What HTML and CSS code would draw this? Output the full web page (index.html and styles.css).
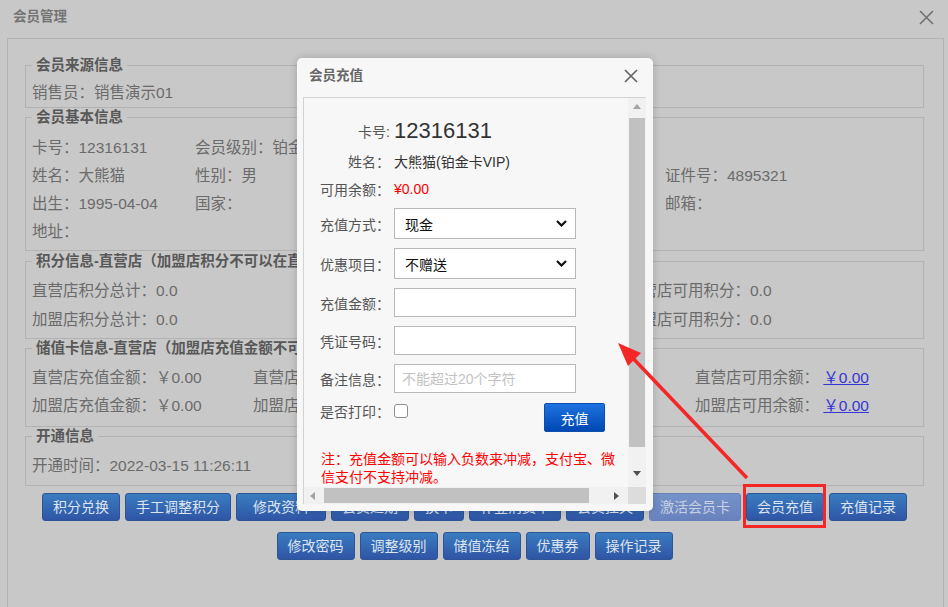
FILE: index.html
```html
<!DOCTYPE html>
<html lang="zh-CN">
<head>
<meta charset="utf-8">
<title>会员管理</title>
<link rel="stylesheet" href="styles.css">
</head>
<body>
<div class="window">
  <header class="win-head">
    <span class="win-title">会员管理</span>
    <svg class="win-close" width="15" height="15" viewBox="0 0 15 15"><path d="M1 1L14 14M14 1L1 14"/></svg>
  </header>
  <div class="panel">
    <fieldset class="box box-source">
      <legend>会员来源信息</legend>
      <div class="row">销售员：销售演示01</div>
    </fieldset>
    <fieldset class="box box-basic">
      <legend>会员基本信息</legend>
      <div class="grid grid-basic">
        <span>卡号：12316131</span><span>会员级别：铂金卡VIP</span><span>手机：13800000000</span><span></span>
        <span>姓名：大熊猫</span><span>性别：男</span><span>证件类型：身份证</span><span>证件号：4895321</span>
        <span>出生：1995-04-04</span><span>国家：</span><span>地区：</span><span>邮箱：</span>
        <span>地址：</span>
      </div>
    </fieldset>
    <fieldset class="box box-points">
      <legend>积分信息-直营店（加盟店积分不可以在直营店使用）</legend>
      <div class="grid grid-points">
        <span>直营店积分总计：0.0</span><span>直营店已用积分：0.0</span><span>直营店可用积分：0.0</span>
        <span>加盟店积分总计：0.0</span><span>加盟店已用积分：0.0</span><span>加盟店可用积分：0.0</span>
      </div>
    </fieldset>
    <fieldset class="box box-stored">
      <legend>储值卡信息-直营店（加盟店充值金额不可以在直营店使用）</legend>
      <div class="grid grid-stored">
        <span>直营店充值金额：￥0.00</span><span>直营店赠送金额：￥0.00</span><span>直营店可用余额： <a class="money-link" href="#">￥0.00</a></span>
        <span>加盟店充值金额：￥0.00</span><span>加盟店赠送金额：￥0.00</span><span>加盟店可用余额： <a class="money-link" href="#">￥0.00</a></span>
      </div>
    </fieldset>
    <fieldset class="box box-open">
      <legend>开通信息</legend>
      <div class="row">开通时间：2022-03-15 11:26:11</div>
    </fieldset>
    <div class="actions">
      <div class="btn-row">
        <button class="btn">积分兑换</button>
        <button class="btn">手工调整积分</button>
        <button class="btn btn-wide">修改资料</button>
        <button class="btn">会员延期</button>
        <button class="btn">换卡</button>
        <button class="btn">补登消费单</button>
        <button class="btn">会员挂失</button>
        <button class="btn btn-disabled">激活会员卡</button>
        <button class="btn">会员充值</button>
        <button class="btn">充值记录</button>
      </div>
      <div class="btn-row">
        <button class="btn">修改密码</button>
        <button class="btn">调整级别</button>
        <button class="btn">储值冻结</button>
        <button class="btn">优惠券</button>
        <button class="btn">操作记录</button>
      </div>
    </div>
  </div>
</div>

<div class="modal">
  <div class="modal-head">
    <span class="modal-title">会员充值</span>
    <svg class="modal-close" width="14" height="14" viewBox="0 0 14 14"><path d="M1 1L13 13M13 1L1 13"/></svg>
  </div>
  <div class="frame">
    <div class="frame-view">
      <div class="form">
        <div class="f-row f-card"><span class="f-label">卡号:</span><span class="f-card-no">12316131</span></div>
        <div class="f-row f-name"><span class="f-label">姓名：</span><span class="f-val">大熊猫(铂金卡VIP)</span></div>
        <div class="f-row f-bal"><span class="f-label">可用余额：</span><span class="f-val red">¥0.00</span></div>
        <div class="f-row f-field f-first"><span class="f-label">充值方式：</span>
          <div class="select"><span>现金</span><svg width="11" height="7" viewBox="0 0 11 7"><path d="M1 1L5.5 5.5L10 1"/></svg></div>
        </div>
        <div class="f-row f-field"><span class="f-label">优惠项目：</span>
          <div class="select"><span>不赠送</span><svg width="11" height="7" viewBox="0 0 11 7"><path d="M1 1L5.5 5.5L10 1"/></svg></div>
        </div>
        <div class="f-row f-field"><span class="f-label">充值金额：</span><input class="input" type="text"></div>
        <div class="f-row f-field"><span class="f-label">凭证号码：</span><input class="input" type="text"></div>
        <div class="f-row f-field"><span class="f-label">备注信息：</span><input class="input" type="text" placeholder="不能超过20个字符"></div>
        <div class="f-row f-print"><span class="f-label f-label-top">是否打印：</span><input class="check" type="checkbox"><button class="btn-primary">充值</button></div>
        <p class="note">注：充值金额可以输入负数来冲减，支付宝、微信支付不支持冲减。</p>
      </div>
    </div>
    <div class="vbar">
      <span class="sb-btn"><span class="tri tri-up"></span></span>
      <span class="vthumb"></span>
      <span class="sb-fill"></span>
      <span class="sb-btn sb-btn-down"><span class="tri tri-down"></span></span>
    </div>
    <div class="hbar">
      <span class="sb-btn"><span class="tri tri-left"></span></span>
      <span class="hthumb"></span>
      <span class="sb-fill"></span>
      <span class="sb-btn sb-btn-right"><span class="tri tri-right"></span></span>
    </div>
    <div class="corner"></div>
  </div>
</div>

<svg class="annot" width="948" height="607" viewBox="0 0 948 607">
  <rect x="744.5" y="485.5" width="80" height="41" fill="none" stroke="#f42626" stroke-width="3"/>
  <line x1="747" y1="478" x2="628" y2="353" stroke="#f42626" stroke-width="3.5"/>
  <polygon points="618,343 641,353 628,366" fill="#f42626"/>
</svg>
</body>
</html>
```

FILE: styles.css
```css
* { box-sizing: border-box; }
html, body { margin: 0; padding: 0; }
body {
  width: 948px;
  height: 607px;
  overflow: hidden;
  position: relative;
  background: #c8c8c8;
  font-family: "Liberation Sans", "Noto Sans CJK SC", sans-serif;
  color: #6b6b6b;
}

.window {
  height: 607px;
  display: flex;
  flex-direction: column;
}
.win-head {
  height: 38px;
  flex-shrink: 0;
  display: flex;
  align-items: center;
  justify-content: space-between;
  padding: 0 14px 0 13px;
}
.win-title {
  font-size: 13.5px;
  font-weight: bold;
  line-height: 16px;
  color: #747474;
  margin-top: -4px;
}
.win-close { margin-top: -4px; }
.win-close path { stroke: #707070; stroke-width: 1.6; fill: none; }

.panel {
  flex: 1;
  margin: 0 4px 0 7px;
  border: 1px solid #b3b3b3;
  border-bottom: none;
  padding: 18px 19px 0 17px;
  display: flex;
  flex-direction: column;
}

.box {
  margin: 0;
  border: 1px solid #b2b2b2;
  padding: 0 6px;
  min-width: 0;
}
.box legend {
  padding: 0 4px;
  font-size: 14.5px;
  font-weight: bold;
  line-height: 16px;
  color: #585858;
  white-space: nowrap;
}
.box-source { padding-top: 6px; padding-bottom: 0; }
.box-basic { margin-top: 1px; padding-top: 9px; padding-bottom: 4px; }
.box-points { margin-top: 2px; padding-top: 7px; padding-bottom: 4px; }
.box-stored { margin-top: 1px; padding-top: 8px; padding-bottom: 6px; }
.box-open { margin-top: 1px; padding-top: 8px; padding-bottom: 5px; }

.row, .grid {
  font-size: 15.5px;
  line-height: 28px;
  white-space: nowrap;
}
.grid { display: grid; }
.grid span { overflow: hidden; }
.grid-basic { grid-template-columns: 163px 235px 235px 1fr; }
.grid-points { grid-template-columns: 297px 297px 1fr; line-height: 29px; }
.grid-stored { grid-template-columns: 221px 442px 1fr; }
.money-link { color: #3636d6; text-decoration: underline; }

.actions {
  margin-top: 7px;
  display: flex;
  flex-direction: column;
  align-items: center;
  gap: 11px;
}
.btn-row { display: flex; gap: 5px; }
.btn {
  height: 28px;
  padding: 0 10px;
  border: 1px solid #2d5494;
  border-radius: 3px;
  background: linear-gradient(#3a7cc0, #2f55a5);
  color: #dde4ef;
  font-family: "Liberation Sans", "Noto Sans CJK SC", sans-serif;
  font-size: 14px;
  line-height: 26px;
  white-space: nowrap;
}
.btn-wide { padding: 0 16px; }
.btn-disabled {
  background: linear-gradient(#7592c9, #6982be);
  border-color: #6880b6;
  color: #c8d0e2;
}

/* modal */
.modal {
  position: absolute;
  left: 297px;
  top: 58px;
  width: 356px;
  height: 453px;
  background: #f7f7f7;
  border-radius: 5px;
  box-shadow: 0 0 8px rgba(0, 0, 0, 0.18);
  padding: 0 7px 7px 6px;
  display: flex;
  flex-direction: column;
}
.modal-head {
  height: 39px;
  flex-shrink: 0;
  display: flex;
  align-items: center;
  justify-content: space-between;
  padding: 0 8px 0 6px;
}
.modal-title {
  font-size: 13.5px;
  font-weight: bold;
  color: #666;
  line-height: 16px;
  margin-top: -4px;
}
.modal-close { margin-top: -4px; }
.modal-close path { stroke: #666; stroke-width: 1.7; fill: none; }

.frame {
  border-top: 1px solid #d2d2d2;
  border-left: 1px solid #d2d2d2;
  display: grid;
  grid-template-columns: 324px 18px;
  grid-template-rows: 389px 17px;
  background: #f7f7f7;
}
.frame-view { overflow: hidden; }

.form {
  padding-top: 18px;
  font-family: "Liberation Sans", "Noto Sans CJK SC", sans-serif;
}
.f-row {
  display: flex;
  align-items: center;
  gap: 4px;
}
.f-label {
  width: 86px;
  flex-shrink: 0;
  text-align: right;
  font-size: 14px;
  color: #555;
  white-space: nowrap;
}
.f-card { height: 30px; }
.f-card-no { font-size: 22px; line-height: 30px; color: #333; }
.f-name { height: 30px; }
.f-bal { height: 26px; }
.f-val { font-size: 14px; color: #333; white-space: nowrap; }
.red { color: #f00; }
.f-field { margin-top: 9px; }
.f-first { margin-top: 6px; }

.select {
  width: 182px;
  height: 31px;
  border: 1px solid #b9b9b9;
  background: #fff;
  display: flex;
  align-items: center;
  justify-content: space-between;
  padding: 0 8px 0 10px;
  font-size: 14px;
  color: #111;
}
.select path { stroke: #111; stroke-width: 2.2; fill: none; }
.input {
  width: 182px;
  height: 29px;
  margin: 0;
  border: 1px solid #b9b9b9;
  background: #fff;
  padding: 0 7px;
  font-family: "Liberation Sans", "Noto Sans CJK SC", sans-serif;
  font-size: 14px;
  color: #333;
  outline: none;
}
.input::placeholder { color: #c2c2c2; }

.f-print {
  width: 301px;
  height: 29px;
  margin-top: 10px;
  align-items: flex-start;
}
.f-label-top { line-height: 18px; }
.check {
  appearance: none;
  -webkit-appearance: none;
  width: 14px;
  height: 14px;
  margin: 1px 0 0 0;
  border: 1px solid #8e8e8e;
  border-radius: 3px;
  background: #fff;
}
.btn-primary {
  margin-left: auto;
  width: 61px;
  height: 29px;
  border: 1px solid #0b4fae;
  border-radius: 2px;
  background: linear-gradient(#1f73e0, #0047b3);
  color: #fff;
  font-family: "Liberation Sans", "Noto Sans CJK SC", sans-serif;
  font-size: 14px;
  padding: 0;
}
.note {
  margin: 18px 0 0 0;
  padding-left: 17px;
  width: 317px;
  font-size: 14px;
  line-height: 18px;
  color: #f00;
}

/* scrollbars */
.vbar {
  background: #f1f1f1;
  display: flex;
  flex-direction: column;
  align-items: center;
}
.hbar {
  background: #f1f1f1;
  display: flex;
  align-items: center;
}
.corner { background: #dcdcdc; }
.sb-btn {
  width: 17px;
  height: 17px;
  flex-shrink: 0;
  display: flex;
  align-items: center;
  justify-content: center;
}
.sb-btn-down { margin-bottom: 5px; }
.sb-btn-right { margin-right: 3px; }
.sb-fill { flex: 1; }
.vthumb {
  width: 16px;
  height: 329px;
  margin-top: 3px;
  background: #c1c1c1;
}
.hthumb {
  width: 265px;
  height: 15px;
  margin-left: 3px;
  background: #c1c1c1;
}
.tri { width: 0; height: 0; border-style: solid; }
.tri-up { border-width: 0 4.5px 5px 4.5px; border-color: transparent transparent #a3a3a3 transparent; }
.tri-down { border-width: 5px 4.5px 0 4.5px; border-color: #505050 transparent transparent transparent; }
.tri-left { border-width: 4.5px 5px 4.5px 0; border-color: transparent #a3a3a3 transparent transparent; }
.tri-right { border-width: 4.5px 0 4.5px 5px; border-color: transparent transparent transparent #505050; }

.annot {
  position: absolute;
  left: 0;
  top: 0;
  pointer-events: none;
}
```
